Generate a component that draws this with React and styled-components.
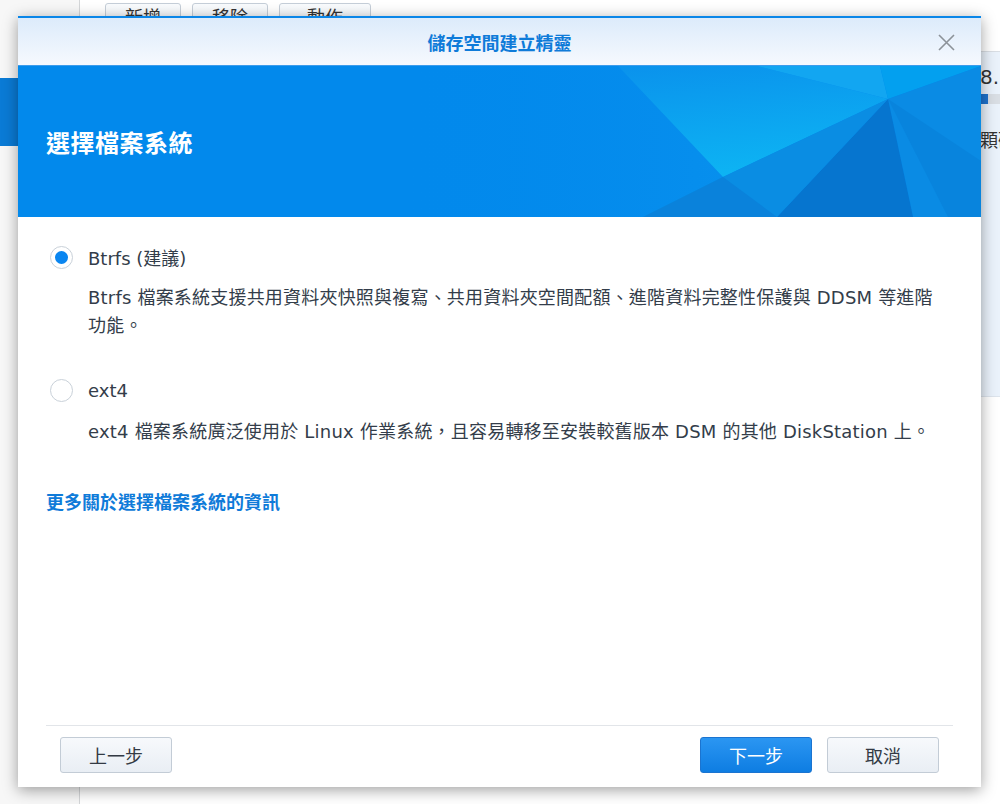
import React from 'react';
import styled, { createGlobalStyle } from 'styled-components';

const Global = createGlobalStyle`
  html, body { margin: 0; padding: 0; width: 1000px; height: 804px; overflow: hidden; background: #ffffff; }
  body { font-family: "DejaVu Sans", "Noto Sans CJK TC", sans-serif; color: #333d4a; }
  * { box-sizing: border-box; }
`;

const Desktop = styled.div`
  position: relative;
  width: 1000px;
  height: 804px;
  display: flex;
  overflow: hidden;
`;

const Sidebar = styled.div`
  width: 80px;
  flex: none;
  background: #f7f7f7;
  border-right: 1px solid #d4d6d8;
  padding-top: 78px;
`;

const SideItem = styled.div`
  height: 68px;
  background: ${p => (p.$active ? '#0a7bd6' : 'transparent')};
`;

const Main = styled.div`
  flex: 1;
  display: flex;
  flex-direction: column;
  min-width: 0;
`;

const Toolbar = styled.div`
  height: 52px;
  display: flex;
  gap: 11px;
  padding: 3px 0 0 25px;
  border-bottom: 1px solid #d9dee4;
`;

const ToolButton = styled.div`
  width: ${p => p.$w}px;
  height: 30px;
  border: 1px solid #c5ced8;
  border-radius: 3px;
  background: linear-gradient(#fafcfe, #edf1f5);
  font-size: 18px;
  line-height: 28px;
  text-align: center;
  color: #333;
`;

const SelectedRow = styled.div`
  height: 345px;
  background: #eaf2fb;
  border-bottom: 1px solid #dde4ec;
  padding: 12px 0 0 900px;
  display: flex;
  flex-direction: column;
  white-space: nowrap;
  font-size: 20px;
  color: #333;
`;

const Capacity = styled.div`
  line-height: 26px;
`;

const UsageBar = styled.div`
  margin-top: 4px;
  width: 200px;
  height: 10px;
  background: #d9dee4;
  display: flex;
`;

const UsageFill = styled.div`
  height: 100%;
  background: #1f72cc;
`;

const DiskCount = styled.div`
  margin: 24px 0 0 -18px;
  font-size: 18px;
  line-height: 26px;
`;

const Dialog = styled.div`
  position: absolute;
  left: 18px;
  top: 16px;
  width: 963px;
  height: 771px;
  background: #ffffff;
  border-top: 2px solid #0a86e8;
  box-shadow: 0 3px 14px rgba(0, 0, 0, 0.38);
  display: flex;
  flex-direction: column;
`;

const TitleBar = styled.div`
  position: relative;
  height: 48px;
  flex: none;
  background: linear-gradient(#dcebfb, #f6f9fe);
  display: flex;
  align-items: center;
  justify-content: center;
  font-size: 18px;
  font-weight: bold;
  color: #0f7bd9;
  border-bottom: 1px solid #3d9cec;
`;

const CloseButton = styled.div`
  position: absolute;
  right: 26px;
  top: 16px;
  width: 17px;
  height: 17px;
  display: flex;
`;

const Banner = styled.div`
  position: relative;
  height: 151px;
  flex: none;
  background: #0289ec;
  display: flex;
  align-items: center;
  padding-left: 28px;
  overflow: hidden;
`;

const BannerArt = styled.svg`
  position: absolute;
  left: 0;
  top: 0;
`;

const BannerTitle = styled.h1`
  position: relative;
  margin: 0;
  font-size: 24px;
  font-weight: bold;
  color: #ffffff;
  letter-spacing: 0.5px;
`;

const Body = styled.div`
  flex: 1;
  padding: 26px 36px 0 32px;
  display: flex;
  flex-direction: column;
`;

const Option = styled.label`
  display: flex;
  align-items: center;
  gap: 15px;
  height: 28px;
  font-size: 18px;
  color: #333d4a;
  margin-top: ${p => p.$mt || 0}px;
  cursor: pointer;
`;

const Radio = styled.span`
  width: 23px;
  height: 23px;
  border-radius: 50%;
  border: 1.5px solid #c9d1d9;
  background: #ffffff;
  display: flex;
  align-items: center;
  justify-content: center;
  flex: none;
  &::after {
    content: '';
    width: 13px;
    height: 13px;
    border-radius: 50%;
    background: ${p => (p.$checked ? '#0a86f0' : 'transparent')};
  }
`;

const Description = styled.p`
  margin: ${p => p.$mt}px 0 0 38px;
  font-size: 18px;
  line-height: 28px;
  letter-spacing: 0.2px;
  color: #333d4a;
`;

const MoreLink = styled.a`
  margin: 43px 0 0 -4px;
  font-size: 18px;
  line-height: 28px;
  font-weight: bold;
  color: #0f7bd9;
  text-decoration: none;
`;

const Footer = styled.div`
  margin: 0 28px;
  border-top: 1px solid #e2e5e9;
  padding: 11px 14px 14px;
  display: flex;
  justify-content: space-between;
`;

const ButtonGroup = styled.div`
  display: flex;
  gap: 15px;
`;

const Button = styled.button`
  width: 112px;
  height: 36px;
  border-radius: 3px;
  font-family: inherit;
  font-size: 18px;
  cursor: pointer;
  border: 1px solid ${p => (p.$primary ? '#1b74d0' : '#c3ccd6')};
  background: ${p =>
    p.$primary ? 'linear-gradient(#2b96f2, #0e7de2)' : 'linear-gradient(#f7f9fc, #e9eef4)'};
  color: ${p => (p.$primary ? '#ffffff' : '#333a44')};
`;

function BannerPattern() {
  return (
    <BannerArt width="963" height="151" viewBox="0 0 963 151">
      <defs>
        <linearGradient id="glow" x1="0" y1="0" x2="0.25" y2="1">
          <stop offset="0" stopColor="#0a92ec" />
          <stop offset="1" stopColor="#0db3f3" />
        </linearGradient>
        <linearGradient id="left" x1="0" y1="0" x2="1" y2="0">
          <stop offset="0" stopColor="#0289ec" stopOpacity="0" />
          <stop offset="1" stopColor="#0a93ee" />
        </linearGradient>
      </defs>
      <polygon points="400,0 600,0 705,111 625,151 380,151" fill="url(#left)" opacity="0.6" />
      <polygon points="600,0 739,0 870,33 705,111" fill="url(#glow)" />
      <polygon points="739,0 862,0 870,33" fill="#12a6f1" />
      <polygon points="862,0 963,0 870,33" fill="#03a0ef" />
      <polygon points="870,33 963,0 963,151 895,151" fill="#0a8be4" />
      <polygon points="870,33 963,95 963,151 930,151" fill="#0884dd" />
      <polygon points="870,33 895,151 759,151" fill="#0675cf" />
      <polygon points="705,111 870,33 759,151 625,151" fill="#0a8de3" />
      <polygon points="705,111 759,151 625,151" fill="#0a82db" />
    </BannerArt>
  );
}

export default function App() {
  return (
    <>
      <Global />
      <Desktop>
        <Sidebar>
          <SideItem $active />
        </Sidebar>
        <Main>
          <Toolbar>
            <ToolButton $w={76}>新增</ToolButton>
            <ToolButton $w={76}>移除</ToolButton>
            <ToolButton $w={92}>動作</ToolButton>
          </Toolbar>
          <SelectedRow>
            <Capacity>8.7 TB</Capacity>
            <UsageBar>
              <UsageFill style={{ width: '8px' }} />
            </UsageBar>
            <DiskCount>一顆硬碟</DiskCount>
          </SelectedRow>
        </Main>

        <Dialog>
          <TitleBar>
            儲存空間建立精靈
            <CloseButton>
              <svg width="17" height="17" viewBox="0 0 17 17">
                <path d="M1 1 L16 16 M16 1 L1 16" stroke="#8c9299" strokeWidth="1.6" fill="none" />
              </svg>
            </CloseButton>
          </TitleBar>
          <Banner>
            <BannerPattern />
            <BannerTitle>選擇檔案系統</BannerTitle>
          </Banner>
          <Body>
            <Option>
              <Radio $checked />
              Btrfs (建議)
            </Option>
            <Description $mt={13}>
              Btrfs 檔案系統支援共用資料夾快照與複寫、共用資料夾空間配額、進階資料完整性保護與 DDSM 等進階功能。
            </Description>
            <Option $mt={36}>
              <Radio />
              ext4
            </Option>
            <Description $mt={14}>
              ext4 檔案系統廣泛使用於 Linux 作業系統，且容易轉移至安裝較舊版本 DSM 的其他 DiskStation 上。
            </Description>
            <MoreLink href="#">更多關於選擇檔案系統的資訊</MoreLink>
          </Body>
          <Footer>
            <Button>上一步</Button>
            <ButtonGroup>
              <Button $primary>下一步</Button>
              <Button>取消</Button>
            </ButtonGroup>
          </Footer>
        </Dialog>
      </Desktop>
    </>
  );
}
